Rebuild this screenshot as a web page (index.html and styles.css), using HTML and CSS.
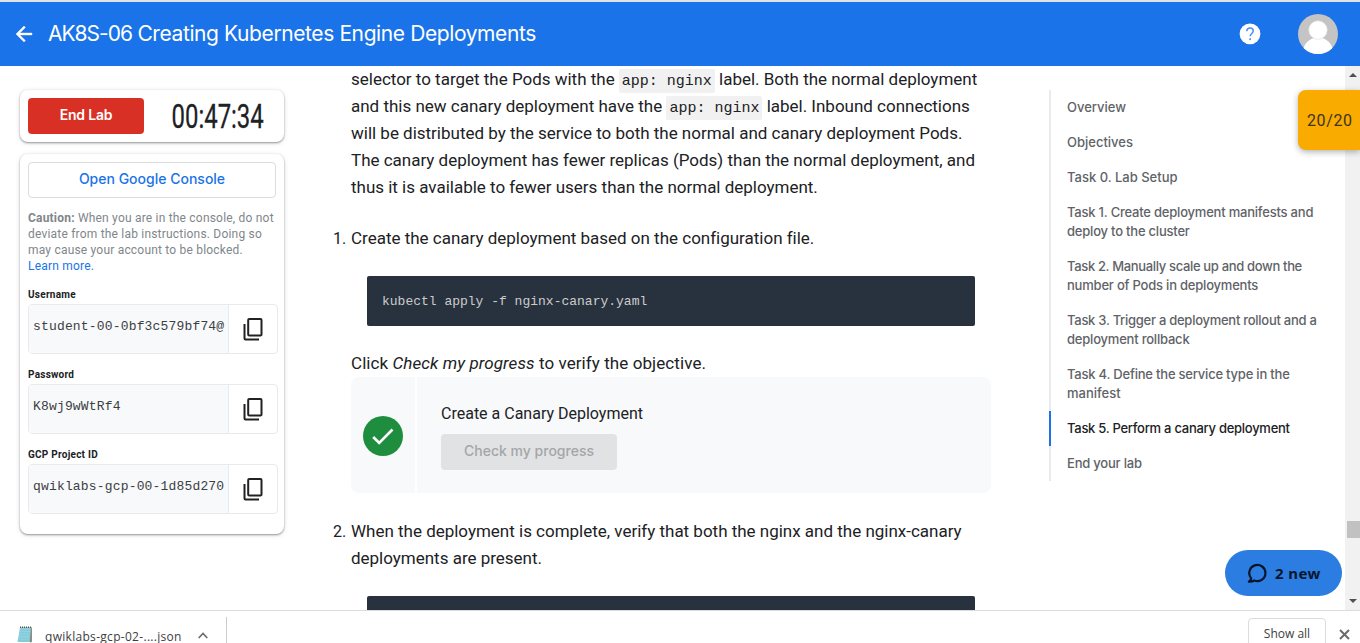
FILE: index.html
```html
<!DOCTYPE html>
<html lang="en">
<head>
<meta charset="utf-8">
<title>AK8S-06 Creating Kubernetes Engine Deployments</title>
<link rel="stylesheet" href="styles.css">
</head>
<body>
<header class="topbar">
  <svg class="back" viewBox="0 0 24 24" width="24" height="24"><path d="M20 11H7.83l5.59-5.59L12 4l-8 8 8 8 1.41-1.41L7.83 13H20z" fill="#fff" stroke="#fff" stroke-width=".4"/></svg>
  <h1 class="title"><span class="lab-code">AK8S-06</span> <span class="lab-name">Creating Kubernetes Engine Deployments</span></h1>
  <svg class="help" viewBox="0 0 22 22" width="22" height="22"><circle cx="11" cy="10.8" r="10.4" fill="#fff"/><path d="M7.8 8.3C7.8 6.200 9.100 4.900 11.100 4.900C13 4.900 14.200 6.100 14.200 7.900C14.200 10.400 11.200 10.600 11.200 13.300" fill="none" stroke="#4a8df0" stroke-width="1.5"/><rect x="10.300" y="15.300" width="1.700" height="1.800" fill="#4a8df0"/></svg>
  <svg class="avatar" viewBox="0 0 40 40" width="40" height="40"><defs><clipPath id="round"><circle cx="20" cy="20" r="20"/></clipPath></defs><g clip-path="url(#round)"><rect width="40" height="40" fill="#c4c4c4"/><ellipse cx="20" cy="38" rx="15" ry="14.500" fill="#fff"/><circle cx="20" cy="16" r="9.300" fill="#fff" stroke="#dcdcdc" stroke-width=".6"/></g></svg>
</header>
<div class="stage">
  <aside class="side">
    <section class="card timer-card">
      <button class="end">End Lab</button>
      <div class="clock"><span>00:47:34</span></div>
    </section>
    <section class="card creds">
      <button class="open">Open Google Console</button>
      <p class="caution"><b>Caution:</b> When you are in the console, do not<br>deviate from the lab instructions. Doing so<br>may cause your account to be blocked.<br><a>Learn more.</a></p>
      <div class="field"><label>Username</label><div class="box"><code>student-00-0bf3c579bf74@</code><svg viewBox="0 0 20 24" width="20" height="24"><rect x="5.200" y="2" width="13.300" height="16.500" rx="1" fill="none" stroke="#202124" stroke-width="2"/><path d="M1.500 7v14.500q0 1 1 1H16" fill="none" stroke="#202124" stroke-width="2"/></svg></div></div>
      <div class="field"><label>Password</label><div class="box"><code>K8wj9wWtRf4</code><svg viewBox="0 0 20 24" width="20" height="24"><rect x="5.200" y="2" width="13.300" height="16.500" rx="1" fill="none" stroke="#202124" stroke-width="2"/><path d="M1.500 7v14.500q0 1 1 1H16" fill="none" stroke="#202124" stroke-width="2"/></svg></div></div>
      <div class="field"><label>GCP Project ID</label><div class="box"><code>qwiklabs-gcp-00-1d85d270</code><svg viewBox="0 0 20 24" width="20" height="24"><rect x="5.200" y="2" width="13.300" height="16.500" rx="1" fill="none" stroke="#202124" stroke-width="2"/><path d="M1.500 7v14.500q0 1 1 1H16" fill="none" stroke="#202124" stroke-width="2"/></svg></div></div>
    </section>
  </aside>
  <main class="content">
    <p class="intro">selector to target the Pods with the <code>app: nginx</code> label. Both the normal deployment<br>and this new canary deployment have the <code>app: nginx</code> label. Inbound connections<br>will be distributed by the service to both the normal and canary deployment Pods.<br>The canary deployment has fewer replicas (Pods) than the normal deployment, and<br>thus it is available to fewer users than the normal deployment.</p>
    <div class="step"><span class="num">1.</span><p>Create the canary deployment based on the configuration file.</p></div>
    <pre class="cmd">kubectl apply -f nginx-canary.yaml</pre>
    <p class="click">Click <em>Check my progress</em> to verify the objective.</p>
    <section class="progress">
      <div class="status"><svg viewBox="0 0 40 40" width="40" height="40"><circle cx="20" cy="20" r="20" fill="#1e8e3e"/><path d="M10.200 21l6 6L29.500 13.500" fill="none" stroke="#fff" stroke-width="2.600"/></svg></div>
      <div class="check"><p>Create a Canary Deployment</p><button disabled>Check my progress</button></div>
    </section>
    <div class="step"><span class="num">2.</span><p>When the deployment is complete, verify that both the nginx and the nginx-canary<br>deployments are present.</p></div>
    <pre class="cmd"></pre>
  </main>
  <nav class="toc">
    <a class="short">Overview</a>
    <a class="short">Objectives</a>
    <a class="short">Task 0. Lab Setup</a>
    <a>Task 1. Create deployment manifests and<br>deploy to the cluster</a>
    <a><span class="tight">Task 2. Manually scale up and down the</span><br>number of Pods in deployments</a>
    <a><span class="snug">Task 3. Trigger a deployment rollout and a</span><br>deployment rollback</a>
    <a>Task 4. Define the service type in the<br><span class="short">manifest</span></a>
    <a class="active snug">Task 5. Perform a canary deployment</a>
    <a>End your lab</a>
  </nav>
  <div class="scroll">
    <svg viewBox="0 0 8 4" width="8" height="4"><path d="M0 4L4 0l4 4z" fill="#505050"/></svg>
    <i class="thumb"></i>
    <svg viewBox="0 0 8 4" width="8" height="4"><path d="M0 0l4 4 4-4z" fill="#505050"/></svg>
  </div>
  <div class="score">20/20</div>
  <button class="chat"><svg viewBox="0 0 20 20" width="20" height="20"><path d="M4.200 15.300A8.100 8.100 0 1 1 7.200 17.500C6 18.300 4 18.800 1.900 18.600C3.300 17.600 4 16.600 4.200 15.300z" fill="none" stroke="#08162c" stroke-width="2.200" stroke-linejoin="round"/></svg><span>2 new</span></button>
</div>
<footer class="downloads">
  <svg class="note" viewBox="0 0 16 17" width="16" height="17"><path d="M3.500 1.500h11.500v14.500L13 16.500z" fill="#8b8f83"/><path d="M3 1.500h11L12.500 16H.5z" fill="#84cbdc"/><path d="M3 3h10M3 5.500h10M2.500 8h10M2 10.500h10M2 13h10" stroke="#94d2e1" stroke-width="1"/><path d="M3 1.200h11.500" stroke="#555" stroke-width="1.500" stroke-dasharray="1 1"/></svg>
  <span class="file">qwiklabs-gcp-02-....json</span>
  <svg class="caret" viewBox="0 0 10 7" width="10" height="7"><path d="M.7 6L5 1.500 9.300 6" fill="none" stroke="#6a6d70" stroke-width="1.700"/></svg>
  <i class="sep"></i>
  <button class="all">Show all</button>
  <svg class="close" viewBox="0 0 11 11" width="11" height="11"><path d="M1 1l9 9M10 1l-9 9" stroke="#6a6d70" stroke-width="2"/></svg>
</footer>
</body>
</html>
```
FILE: styles.css
```css
* { box-sizing: border-box; }
body { margin: 0; width: 1360px; height: 643px; overflow: hidden; display: flex; flex-direction: column; background: #fff; color: #202124; font-family: Roboto, sans-serif; }
p, h1, pre { margin: 0; font-weight: 400; }
button { margin: 0; padding: 0; border: 0; font-family: inherit; }
svg { display: block; flex: none; }

.topbar { height: 66px; flex: none; display: flex; align-items: center; padding: 0 22px 0 12px; border-top: 2px solid #dee1e6; background: #1a73e8; color: #fff; }
.title { margin-left: 12px; flex: 1; font: 400 21px/30px Inter, sans-serif; white-space: nowrap; letter-spacing: -.5px; }
.lab-code { letter-spacing: -1px; }
.lab-name { letter-spacing: -.4px; }
.help { margin-right: 37px; }

.stage { position: relative; height: 544px; flex: none; display: flex; overflow: hidden; }
.side { width: 333px; flex: none; padding: 24px 49px 0 20px; }
.card { width: 264px; background: #fff; border-radius: 8px; box-shadow: 0 1px 2px rgba(60,64,67,.5), 0 1px 5px rgba(60,64,67,.15); }
.timer-card { height: 52px; display: flex; padding: 8px; }
.end { width: 116px; height: 36px; padding-bottom: 2px; border-radius: 4px; background: #d93025; color: #fff; font: 600 14px/34px Inter, sans-serif; letter-spacing: -.2px; }
.clock { width: 132px; display: flex; justify-content: center; font-size: 33px; line-height: 37px; padding-left: 15px; font-weight: 400; }
.clock span { transform: scaleX(.725); -webkit-text-stroke: .3px #202124; }
.creds { margin-top: 12px; height: 380px; padding: 8px; }
.open { display: block; width: 248px; height: 36px; padding-bottom: 2px; border: 1px solid #dadce0; border-radius: 4px; background: #fff; color: #1a73e8; font: 500 14px/32px Inter, sans-serif; }
.caution { margin-top: 12px; font-size: 12px; line-height: 16px; color: #80868b; white-space: nowrap; letter-spacing: .2px; }
.caution a { color: #1a73e8; }
.field { height: 80px; padding-top: 14px; }
.field label { display: block; font-size: 10px; line-height: 14px; font-weight: 700; letter-spacing: .25px; height: 16px; }
.box { width: 250px; height: 50px; border: 1px solid #e8eaed; border-radius: 4px; display: flex; align-items: center; }
.box code { width: 200px; height: 48px; padding: 0 0 0 4px; border-right: 1px solid #e8eaed; background: #f8f9fa; font: 13px/43px "Liberation Mono", monospace; letter-spacing: .17px; color: #3c4043; }
.box svg { margin-left: 14px; }

.content { width: 716px; flex: none; font-size: 17px; line-height: 27px; white-space: nowrap; letter-spacing: -.01px; }
.intro { margin-left: 18px; }
.intro code { font: 15px/1 "Liberation Mono", monospace; padding: 4px 3px 3px; background: #f1f1f1; border-radius: 2px; letter-spacing: 0; }
.step { margin-top: 24px; display: flex; }
.num { width: 18px; flex: none; font-size: 16px; }
.cmd { width: 608px; height: 50px; margin: 24px 0 0 34px; padding: 0 15px; background: #28323e; border-radius: 2px; color: #ccc; font: 13px/52px "Liberation Mono", monospace; letter-spacing: 0; }
.click { margin: 24px 0 0 18px; letter-spacing: .08px; }
.progress { width: 640px; height: 116px; margin-left: 18px; display: flex; gap: 2px; border-radius: 8px; overflow: hidden; }
.status { width: 64px; background: #f8f9fa; display: flex; align-items: center; justify-content: center; padding-top: 2px; }
.check { flex: 1; background: #f8f9fa; padding: 23px 24px; }
.check p { font-size: 16px; letter-spacing: 0; }
.check button { display: block; margin-top: 7px; width: 176px; height: 36px; padding-bottom: 2px; border-radius: 4px; background: #e1e2e3; color: #a4a6a9; font: 500 14px/34px Inter, sans-serif; }
.progress + .step { margin-top: 25px; }

.toc { width: 280px; flex: none; margin-top: 24px; font: 500 13px/19px Inter, sans-serif; color: #5f6368; white-space: nowrap; letter-spacing: -.21px; }
.toc a { display: block; padding: 8px 0 8px 16px; border-left: 2px solid #e8eaed; }
.toc .short { letter-spacing: 0; }
.toc .snug { letter-spacing: -.27px; }
.toc .tight { letter-spacing: -.34px; }
.toc .active { color: #202124; border-color: #1a73e8; }

.scroll { width: 15px; margin-left: auto; flex: none; background: #f1f1f1; display: flex; flex-direction: column; align-items: center; padding: 7px 0 7px 1px; }
.thumb { width: 13px; height: 17px; margin: 444px 0 auto; background: #c1c1c1; }
.score { position: absolute; right: 0; top: 24px; width: 62px; height: 60px; border-radius: 8px 0 0 8px; background: #f9ab00; box-shadow: 0 2px 6px rgba(0,0,0,.3); font-size: 16px; line-height: 61px; padding-left: 9px; letter-spacing: .6px; color: #3c3420; }
.chat { position: absolute; left: 1225px; top: 484px; width: 117px; height: 46px; border-radius: 23px; background: #2b7de1; color: #08162c; display: flex; align-items: center; padding: 0 0 1px 22px; gap: 8px; font: 700 15px/20px "Noto Sans", sans-serif; letter-spacing: .4px; }
.chat span { padding-top: 1px; }

.downloads { height: 33px; flex: none; border-top: 1px solid #dadce0; display: flex; align-items: flex-start; background: #fff; color: #3c4043; font: 12px/16px "Open Sans", sans-serif; white-space: nowrap; }
.note { margin: 15px 0 0 17px; }
.file { margin: 18px 0 0 12px; width: 137px; letter-spacing: .3px; }
.caret { margin: 21px 0 0 16px; }
.sep { width: 1px; height: 27px; margin: 6px 0 0 18px; background: #ccc; }
.all { margin: 7px 0 0 auto; width: 78px; height: 34px; padding-bottom: 2px; border: 1px solid #dadce0; border-radius: 4px; background: #fff; color: #3c4043; font: 12px/28px "Open Sans", sans-serif; }
.close { margin: 18px 10px 0 13px; }
```
